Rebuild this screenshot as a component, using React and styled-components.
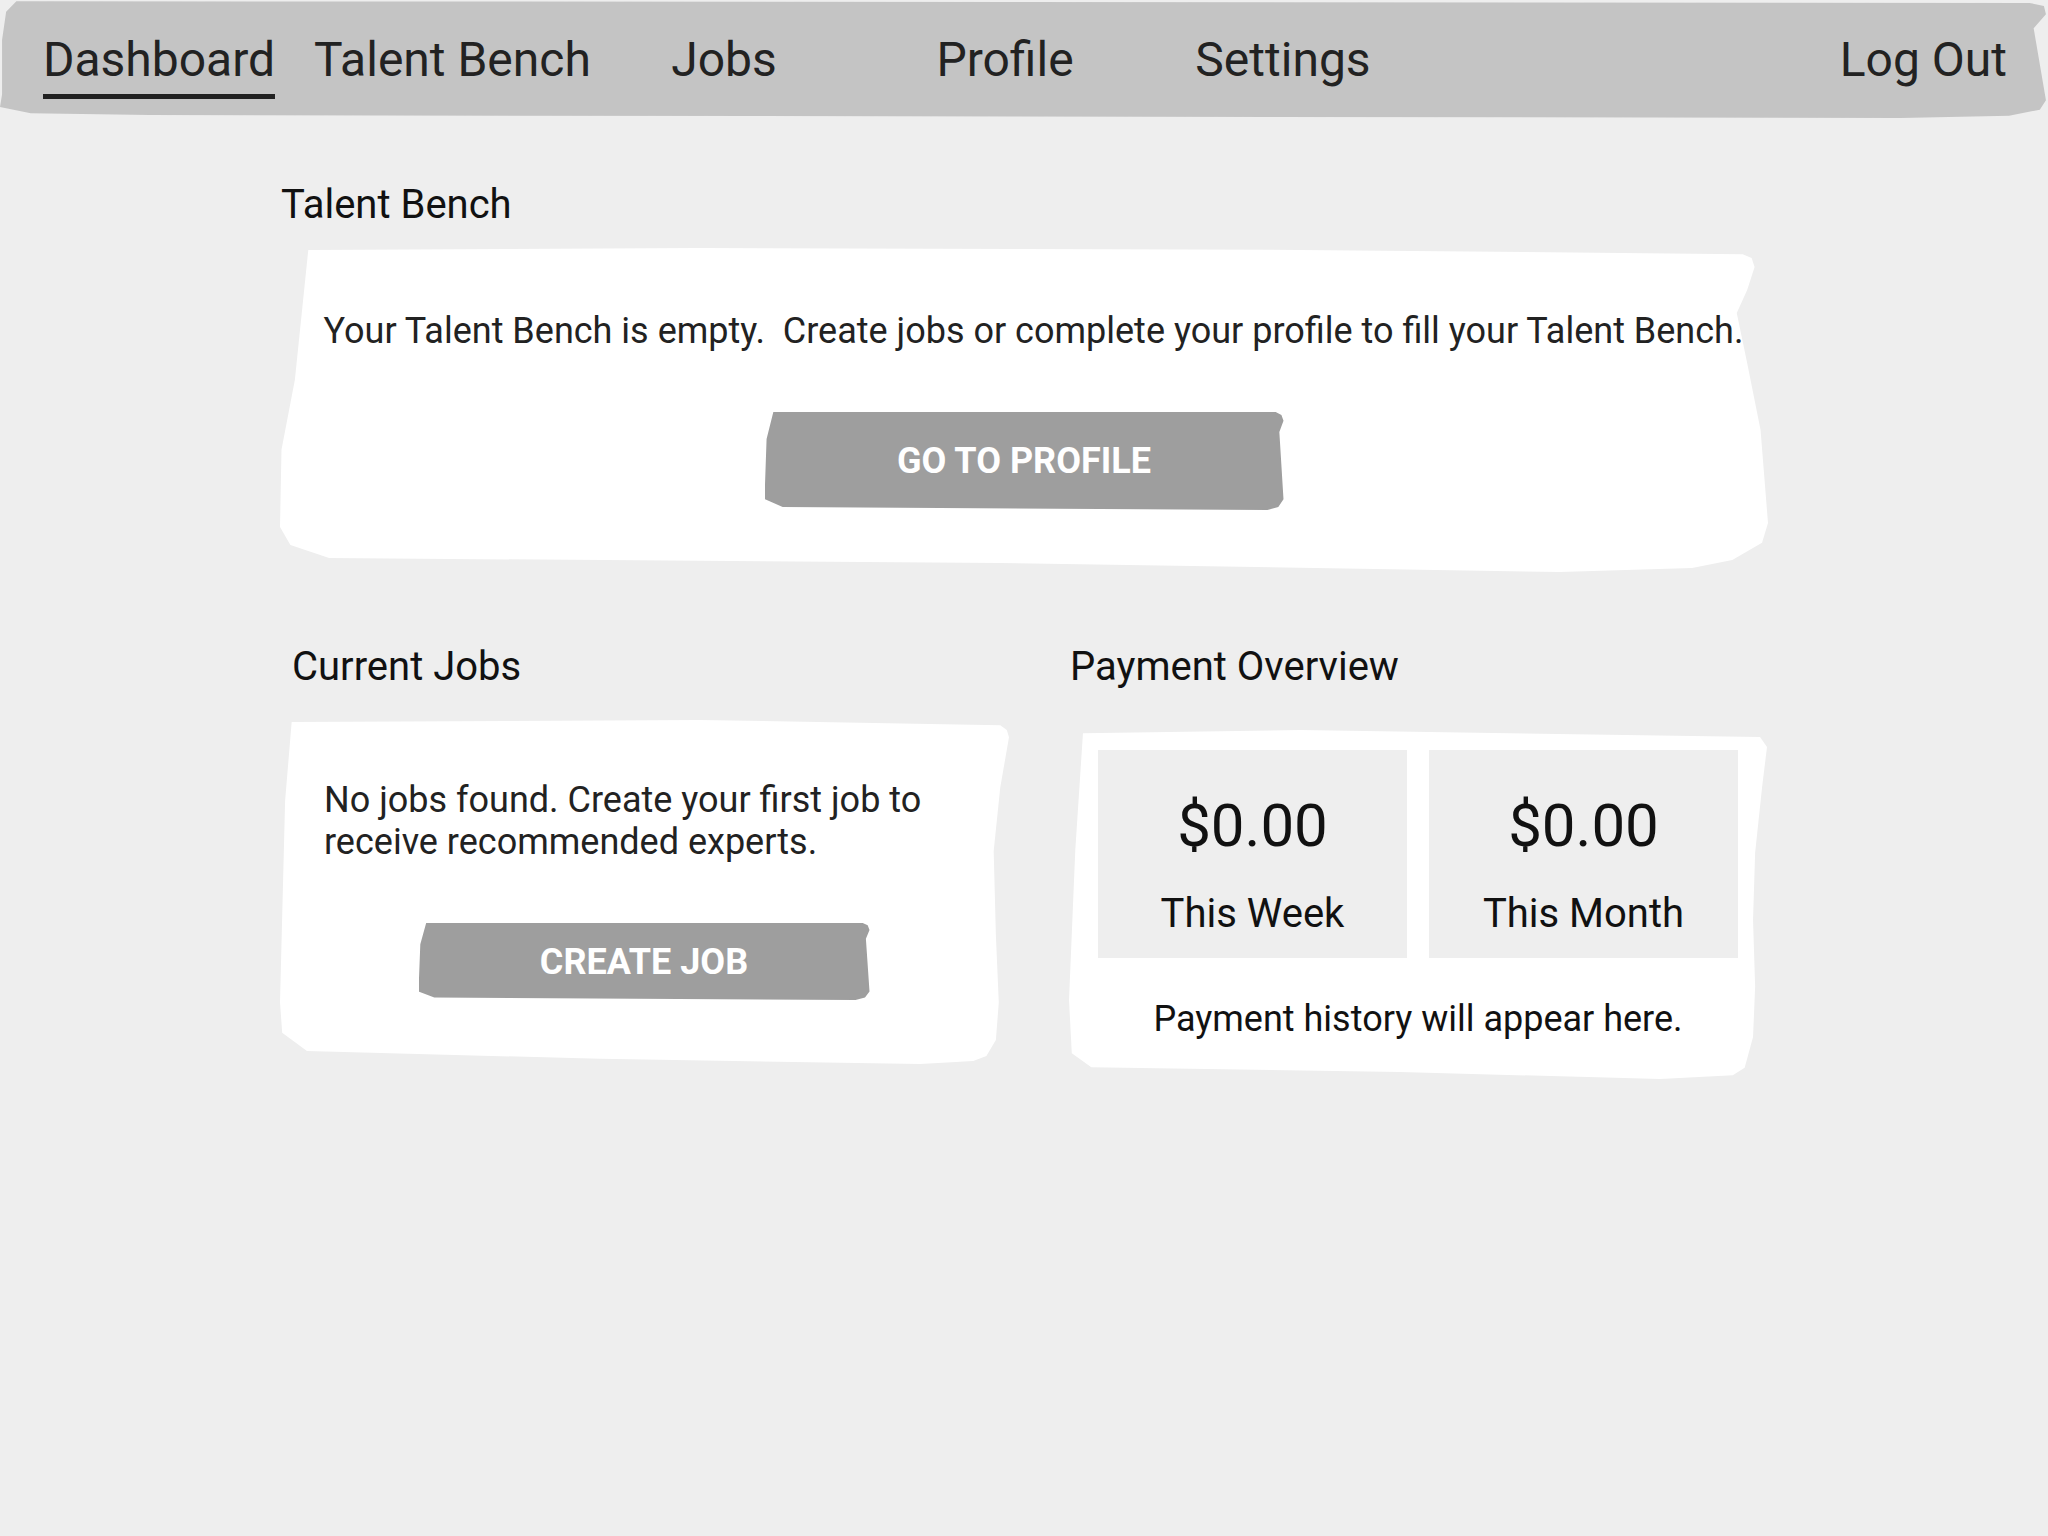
import React from 'react';
import styled, { createGlobalStyle } from 'styled-components';

const GlobalStyle = createGlobalStyle`
html, body {
  margin: 0;
  padding: 0;
  background: #eeeeee;
}
body {
  font-family: Roboto, "Noto Sans", sans-serif;
  color: #212121;
}
* { box-sizing: border-box; }
`;

const tabs = [
    { label: 'Dashboard', w: 270, active: true },
    { label: 'Talent Bench', w: 317 },
    { label: 'Jobs', w: 226 },
    { label: 'Profile', w: 336 },
    { label: 'Settings', w: 220 },
];

const stats = [
    { amount: '$0.00', label: 'This Week' },
    { amount: '$0.00', label: 'This Month' },
];

const App = () => {
    return (
        <Page>
            <GlobalStyle />
            <NavBar>
                {tabs.map((t) => (
                    <Tab key={t.label} $w={t.w}>
                        <TabLabel $active={t.active}>{t.label}</TabLabel>
                    </Tab>
                ))}
                <LogOut>Log Out</LogOut>
            </NavBar>

            <Main>
                <Title $space={20} $indent={1}>Talent Bench</Title>
                <BenchPanel>
                    <BenchMessage>Your Talent Bench is empty.{'\u00a0'} Create jobs or complete your profile to fill your Talent Bench.</BenchMessage>
                    <ButtonRow>
                        <Button $w={519} $h={98}>Go to Profile</Button>
                    </ButtonRow>
                </BenchPanel>

                <Columns>
                    <Column>
                        <Title $space={30} $indent={12}>Current Jobs</Title>
                        <JobsPanel>
                            <Message>No jobs found. Create your first job to receive recommended experts.</Message>
                            <ButtonRow>
                                <Button $w={451} $h={77}>Create Job</Button>
                            </ButtonRow>
                        </JobsPanel>
                    </Column>
                    <Column>
                        <Title $space={40} $indent={1}>Payment Overview</Title>
                        <PaymentPanel>
                            <StatGrid>
                                {stats.map((s) => (
                                    <StatBox key={s.label}>
                                        <Amount>{s.amount}</Amount>
                                        <StatLabel>{s.label}</StatLabel>
                                    </StatBox>
                                ))}
                            </StatGrid>
                            <History>Payment history will appear here.</History>
                        </PaymentPanel>
                    </Column>
                </Columns>
            </Main>
        </Page>
    );
};

export default App;



const Page = styled.div`
min-height: 1536px;
background: #eeeeee;
`;

const NavBar = styled.nav`
display: flex;
align-items: flex-start;
height: 118px;
padding: 32px 41px 0 24px;
background: #c4c4c4;
clip-path: polygon(0.8% 1%, 99.1% 2.5%, 99.8% 5%, 99.9% 12%, 99.3% 24%, 99.9% 85%, 99.6% 93%, 98.1% 98%, 92.8% 100%, 7.3% 97.5%, 1.5% 96%, 0% 90.7%, 0.1% 80%, 0.1% 34%, 0.3% 10%);
`;

const Tab = styled.div`
width: ${(p) => p.$w}px;
text-align: center;
font-size: 48px;
line-height: 56px;
color: #222222;
`;

const TabLabel = styled.span`
display: inline-block;
padding-bottom: 6px;
border-bottom: 5px solid ${(p) => (p.$active ? '#212121' : 'transparent')};
`;

const LogOut = styled.div`
margin-left: auto;
font-size: 48px;
line-height: 56px;
color: #222222;
`;

const Main = styled.main`
width: 1488px;
margin: 0 auto;
padding-top: 63px;
`;

const Title = styled.h2`
margin: 0 0 ${(p) => p.$space}px ${(p) => p.$indent}px;
font-size: 40px;
line-height: 47px;
font-weight: 400;
color: #111111;
`;

const Panel = styled.section`
background: #ffffff;
font-size: 36px;
line-height: 42px;
color: #222222;
`;

const BenchPanel = styled(Panel)`
padding: 62px 0 62px;
text-align: center;
clip-path: polygon(1.9% 0.6%, 28.2% 0%, 68.5% 0.6%, 98.3% 1.9%, 98.9% 3.1%, 99.1% 5.9%, 98.6% 13%, 97.9% 20.1%, 98.6% 35.5%, 99.5% 56.2%, 100% 84.9%, 99.6% 91%, 97.6% 96.3%, 94.9% 98.8%, 86% 100%, 48.4% 97.2%, 3.3% 95.7%, 0.7% 91.7%, 0% 86.1%, 0.1% 62.3%, 1% 40.7%);
`;

const JobsPanel = styled(Panel)`
padding: 59px 45px 64px 44px;
clip-path: polygon(1.6% 0.6%, 57.6% 0%, 98.8% 1.5%, 99.7% 2.9%, 100% 5%, 98.8% 19.6%, 97.9% 38.1%, 98.2% 62.5%, 98.6% 82.1%, 98.2% 93%, 96.9% 97.7%, 95.1% 99.1%, 87.8% 100%, 43.9% 98.5%, 3.7% 96.2%, 0.3% 90.9%, 0% 82.1%, 0.7% 23.5%);
`;

const PaymentPanel = styled(Panel)`
padding: 20px 29px 39px;
clip-path: polygon(2% 0.9%, 33.1% 0%, 99% 2%, 100% 4.9%, 99.3% 16.3%, 98.3% 35.2%, 98% 54.4%, 98.3% 73.6%, 98% 88%, 96.8% 96.8%, 95.1% 98.9%, 84.7% 100%, 47.4% 98%, 3.2% 96.6%, 0.4% 92.6%, 0% 77.4%, 0.9% 34.4%);
`;

const Message = styled.p`
margin: 0;
`;

const BenchMessage = styled(Message)`
padding-left: 19px;
`;

const ButtonRow = styled.div`
display: flex;
justify-content: center;
margin-top: 60px;
`;

const Button = styled.button`
display: inline-flex;
align-items: center;
justify-content: center;
width: ${(p) => p.$w}px;
height: ${(p) => p.$h}px;
padding: 0;
border: none;
background: #9e9e9e;
color: #ffffff;
font-family: Roboto, "Noto Sans", sans-serif;
font-size: 36px;
font-weight: 700;
text-transform: uppercase;
cursor: pointer;
clip-path: polygon(1.7% 0%, 98.5% 0%, 99.6% 3%, 100% 9%, 99.2% 20.4%, 100% 89%, 99% 96.9%, 96.9% 100%, 3.5% 96.9%, 0% 88.8%, 0.4% 27.6%);
`;

const Columns = styled.div`
display: grid;
grid-template-columns: 729px 698px;
column-gap: 60px;
margin-top: 71px;
`;

const Column = styled.div`
display: flex;
flex-direction: column;
`;

const StatGrid = styled.div`
display: grid;
grid-template-columns: 1fr 1fr;
gap: 22px;
`;

const StatBox = styled.div`
display: flex;
flex-direction: column;
align-items: center;
height: 208px;
padding-top: 41px;
background: #eeeeee;
color: #111111;
`;

const Amount = styled.div`
font-size: 60px;
line-height: 70px;
`;

const StatLabel = styled.div`
margin-top: 29px;
font-size: 40px;
line-height: 47px;
`;

const History = styled.p`
margin: 40px 0 0;
text-align: center;
color: #111111;
`;
